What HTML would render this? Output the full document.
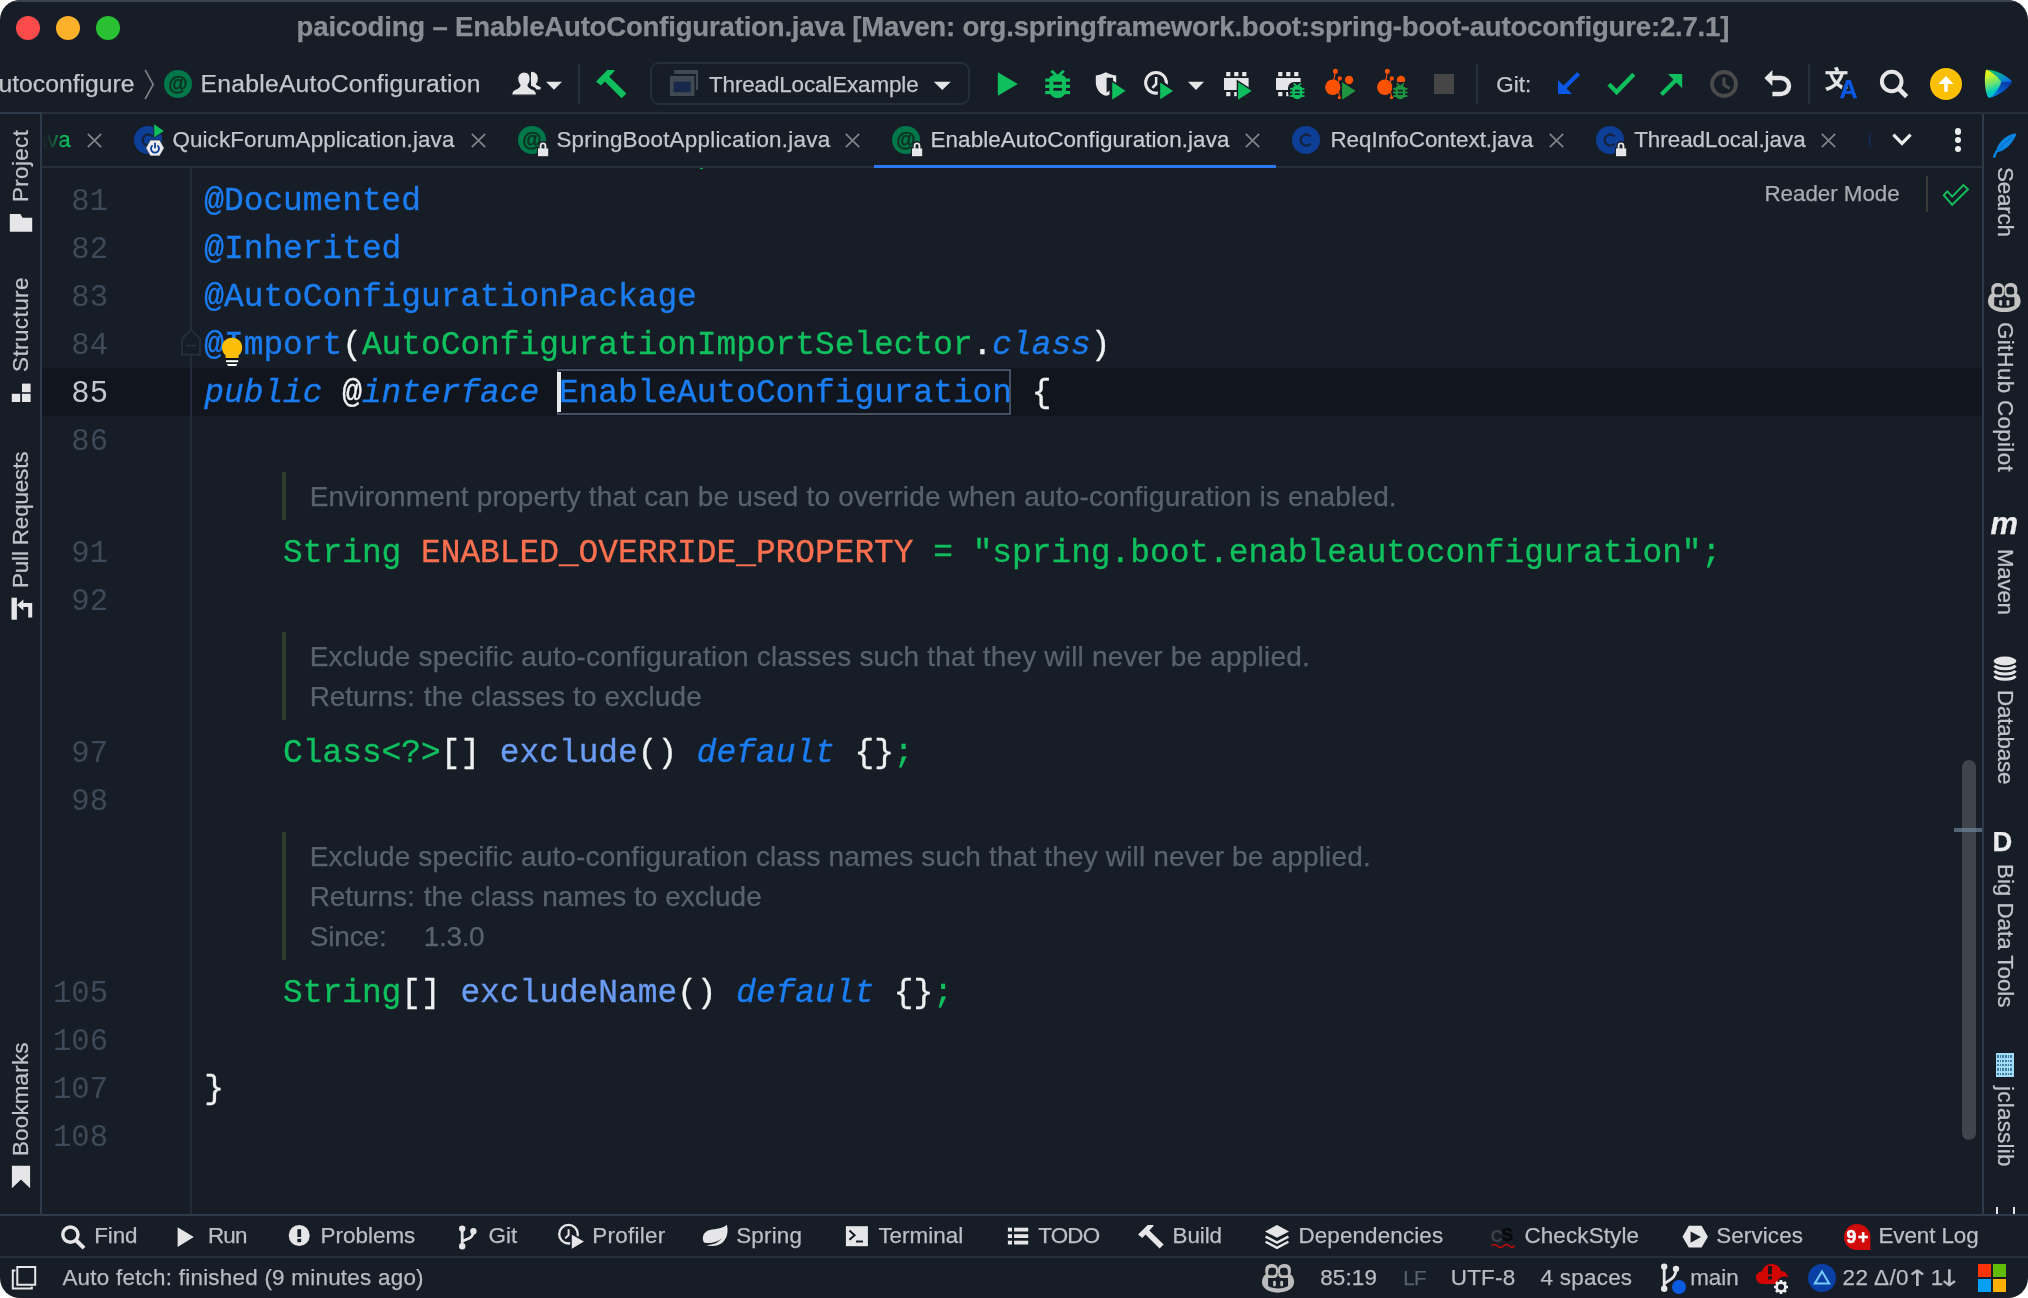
<!DOCTYPE html>
<html lang="en"><head><meta charset="utf-8"><title>paicoding – EnableAutoConfiguration.java</title>
<style>
html,body{margin:0;padding:0;background:#fff;}
body{width:2028px;height:1298px;overflow:hidden;position:relative;font-family:'Liberation Sans',sans-serif;}
#win{will-change:transform;position:absolute;left:0;top:0;width:2028px;height:1298px;background:#171d26;border-radius:20px;overflow:hidden;}
.t{-webkit-text-stroke:0.25px currentColor;position:absolute;white-space:pre;line-height:1;transform-origin:0 0;}
.r{position:absolute;}
.i{position:absolute;overflow:visible;}
.code{-webkit-text-stroke:0.35px currentColor;position:absolute;left:204.3px;white-space:pre;font-family:'Liberation Mono',monospace;font-size:32.83px;line-height:48px;height:48px;color:#f0f1f3;}
.ln{position:absolute;left:42px;width:66px;text-align:right;white-space:pre;font-family:'Liberation Mono',monospace;font-size:30.6px;line-height:48px;height:48px;color:#3e4a58;}
.k{color:#1b7df2;font-style:italic;}
.a{color:#1b7df2;}
.c{color:#10bf5e;}
.o{color:#fc7050;}
.m{color:#6a9cf4;}
.doc{position:absolute;white-space:pre;font-size:28px;line-height:40px;color:#5a626d;}

</style></head>
<body>
<div id="win">
<div class="r" style="left:0px;top:0px;width:2028px;height:2px;background:#3a434e;"></div>
<div class="r" style="left:0px;top:112px;width:2028px;height:2px;background:#262f3b;"></div>
<div class="r" style="left:0px;top:112px;width:42px;height:2px;background:#2f3a48;"></div>
<div class="r" style="left:42px;top:166px;width:1940px;height:2px;background:#262f3b;"></div>
<div class="r" style="left:40px;top:114px;width:2px;height:1100px;background:#2f3a48;"></div>
<div class="r" style="left:1982px;top:114px;width:2px;height:1100px;background:#2f3a48;"></div>
<div class="r" style="left:0px;top:1214px;width:2028px;height:2px;background:#2f3a48;"></div>
<div class="r" style="left:0px;top:1256px;width:2028px;height:2px;background:#262f3b;"></div>
<div class="r" style="left:42px;top:368px;width:1940px;height:48px;background:#11161e;"></div>
<div class="r" style="left:190px;top:168px;width:2px;height:1046px;background:#222b37;"></div>
<div class="r" style="left:16px;top:16px;width:24px;height:24px;background:#fd4b4b;border-radius:50%;"></div>
<div class="r" style="left:56px;top:16px;width:24px;height:24px;background:#fdb02a;border-radius:50%;"></div>
<div class="r" style="left:96px;top:16px;width:24px;height:24px;background:#29c132;border-radius:50%;"></div>
<span class="t" style="font-size:27.6px;color:#8b8f95;letter-spacing:-0.210px;font-weight:700;left:296.60px;top:12.64px;">paicoding – EnableAutoConfiguration.java [Maven: org.springframework.boot:spring-boot-autoconfigure:2.7.1]</span>
<div class="ln" style="top:177.6px;">81</div>
<div class="code" style="top:178.4px"><span class="a">@Documented</span></div>
<div class="ln" style="top:225.6px;">82</div>
<div class="code" style="top:226.4px"><span class="a">@Inherited</span></div>
<div class="ln" style="top:273.6px;">83</div>
<div class="code" style="top:274.4px"><span class="a">@AutoConfigurationPackage</span></div>
<div class="ln" style="top:321.6px;">84</div>
<div class="code" style="top:322.4px"><span class="a">@Import</span>(<span class="c">AutoConfigurationImportSelector</span>.<span class="k">class</span>)</div>
<div class="ln" style="top:369.6px;color:#c3c6cc;">85</div>
<div class="code" style="top:370.4px"><span class="k">public</span> @<span class="k">interface</span> <span class="a">EnableAutoConfiguration</span> {</div>
<div class="ln" style="top:417.6px;">86</div>
<div class="ln" style="top:529.6px;">91</div>
<div class="code" style="top:530.4px">    <span class="c">String</span> <span class="o">ENABLED_OVERRIDE_PROPERTY</span> <span class="c">=</span> <span class="c">"spring.boot.enableautoconfiguration";</span></div>
<div class="ln" style="top:577.6px;">92</div>
<div class="ln" style="top:729.6px;">97</div>
<div class="code" style="top:730.4px">    <span class="c">Class&lt;?&gt;</span>[] <span class="m">exclude</span>() <span class="k">default</span> {}<span class="c">;</span></div>
<div class="ln" style="top:777.6px;">98</div>
<div class="ln" style="top:969.6px;">105</div>
<div class="code" style="top:970.4px">    <span class="c">String</span>[] <span class="m">excludeName</span>() <span class="k">default</span> {}<span class="c">;</span></div>
<div class="ln" style="top:1017.6px;">106</div>
<div class="ln" style="top:1065.6px;">107</div>
<div class="code" style="top:1066.4px">}</div>
<div class="ln" style="top:1113.6px;">108</div>
<div class="r" style="left:557px;top:369px;width:454px;height:46px;box-sizing:border-box;border:2px solid #46515f;"></div>
<div class="r" style="left:557px;top:372px;width:4px;height:40px;background:#e8eaed;"></div>
<div class="r" style="left:282px;top:472px;width:4px;height:48px;background:#2c3b2a;"></div>
<span class="t" style="font-size:28px;color:#5a626d;letter-spacing:0.173px;left:309.70px;top:483.30px;">Environment property that can be used to override when auto-configuration is enabled.</span>
<div class="r" style="left:282px;top:632px;width:4px;height:88px;background:#2c3b2a;"></div>
<span class="t" style="font-size:28px;color:#5a626d;letter-spacing:0.185px;left:309.70px;top:643.30px;">Exclude specific auto-configuration classes such that they will never be applied.</span>
<span class="t" style="font-size:28px;color:#5a626d;letter-spacing:-0.117px;left:309.70px;top:683.30px;">Returns:</span>
<span class="t" style="font-size:28px;color:#5a626d;letter-spacing:0.115px;left:423.80px;top:683.30px;">the classes to exclude</span>
<div class="r" style="left:282px;top:832px;width:4px;height:128px;background:#2c3b2a;"></div>
<span class="t" style="font-size:28px;color:#5a626d;letter-spacing:0.161px;left:309.70px;top:843.30px;">Exclude specific auto-configuration class names such that they will never be applied.</span>
<span class="t" style="font-size:28px;color:#5a626d;letter-spacing:-0.117px;left:309.70px;top:883.30px;">Returns:</span>
<span class="t" style="font-size:28px;color:#5a626d;letter-spacing:0.007px;left:423.80px;top:883.30px;">the class names to exclude</span>
<span class="t" style="font-size:28px;color:#5a626d;letter-spacing:-0.164px;left:309.70px;top:923.30px;">Since:</span>
<span class="t" style="font-size:28px;color:#5a626d;letter-spacing:-0.344px;left:423.80px;top:923.30px;">1.3.0</span>
<span class="t" style="font-size:24.7px;color:#c3c6cc;letter-spacing:0.010px;left:-15.30px;top:72.09px;">autoconfigure</span>
<svg class="i" style="left:142px;top:68px;" width="14" height="34" viewBox="0 0 14 34"><polyline points="3.2,2 11.2,16.5 3.2,31" fill="none" stroke="#7d8189" stroke-width="1.6"/></svg>
<div class="r" style="left:164px;top:70px;width:28px;height:28px;background:#00784a;border-radius:50%;"></div>
<span class="t" style="font-size:19.8px;color:#0e3322;letter-spacing:0.000px;font-weight:700;left:168.30px;top:73.64px;-webkit-text-stroke:0.5px #0e3322;">@</span>
<span class="t" style="font-size:24.7px;color:#c3c6cc;letter-spacing:0.253px;left:200.50px;top:72.09px;">EnableAutoConfiguration</span>
<svg class="i" style="left:510px;top:70px;" width="54" height="28" viewBox="0 0 54 28"><path fill="#e6e6e8" d="M21,1.8 C25.4,1.8 27.8,4.6 27.8,8.4 C27.8,10.8 27,12.6 25.8,13.8 C26,15.4 27.6,16 30.6,17 L30.6,19.4 L26.6,19.4 C25.6,17.8 23.4,16.6 21,15.8 Z"/><path fill="#e6e6e8" stroke="#171d26" stroke-width="1.2" d="M14,2 C18,2 20.3,5 20.3,9 C20.3,12 19.2,14 18,15.2 C18.2,17.4 20,18.2 23.2,19.4 C25.6,20.4 26.6,22.4 26.6,25.2 L1.6,25.2 C1.6,22.4 2.6,20.4 5,19.4 C8.2,18.2 9.8,17.4 10,15.2 C8.8,14 7.7,12 7.7,9 C7.7,5 10,2 14,2 Z"/><path fill="#e6e6e8" d="M36,11.7 L52,11.7 L44,19.8 Z"/></svg>
<div class="r" style="left:578px;top:64px;width:2px;height:40px;background:#27303b;"></div>
<svg class="i" style="left:594px;top:68px;" width="36" height="32" viewBox="0 0 36 32"><path fill="#0fbf5e" d="M2,13.6 L13.4,2 L20,2 L20.6,3 L7,17.6 Z"/><path fill="#0fbf5e" d="M14.8,8.2 L32.4,25.4 L27.6,30.2 L10.2,12.8 Z"/></svg>
<div class="r" style="left:650px;top:62px;width:320px;height:43px;box-sizing:border-box;border:2px solid #252e3a;border-radius:9px;"></div>
<svg class="i" style="left:670px;top:70px;" width="30" height="27" viewBox="0 0 30 27"><path fill="#414953" d="M4.2,0 H28 V20 H26 V4 H4.2 Z"/><rect x="0" y="6" width="24.4" height="20" fill="#414953"/><rect x="3.6" y="11.6" width="17" height="10.6" fill="#18284a"/></svg>
<span class="t" style="font-size:22.4px;color:#c3c6cc;letter-spacing:-0.116px;left:709.00px;top:74.24px;">ThreadLocalExample</span>
<svg class="i" style="left:932px;top:80px;" width="20" height="12" viewBox="0 0 20 12"><path fill="#e6e6e8" d="M1.8,1.7 L18.8,1.7 L10.3,10 Z"/></svg>
<svg class="i" style="left:996px;top:70px;" width="24" height="28" viewBox="0 0 24 28"><path fill="#0fbf5e" d="M1.8,2.2 L21.8,13.9 L1.8,25.8 Z"/></svg>
<svg class="i" style="left:1045px;top:69.6px;" width="26" height="30" viewBox="0 0 26 30"><g transform="scale(0.97)"><path fill="none" stroke="#0fbf5e" stroke-width="3" d="M6.6,0.8 L13,7 L19.4,0.8"/><path fill="#0fbf5e" d="M4.4,9.8 C4.4,6.6 7,5 13,5 C19,5 21.6,6.6 21.6,9.8 L21.6,20 C21.6,25.4 17.8,28.8 13,28.8 C8.2,28.8 4.4,25.4 4.4,20 Z"/><rect fill="#0fbf5e" x="0.2" y="8.8" width="25.6" height="3.3"/><rect fill="#0fbf5e" x="0.2" y="15.2" width="25.6" height="3.3"/><rect fill="#0fbf5e" x="0.2" y="21.6" width="25.6" height="3.3"/><rect fill="#171d26" x="8.6" y="12.2" width="8.8" height="2.9"/><rect fill="#171d26" x="8.6" y="18.5" width="8.8" height="2.9"/></g></svg>
<svg class="i" style="left:1094px;top:70px;" width="34" height="32" viewBox="0 0 34 32"><path fill="#e6e6e8" d="M1.8,5.4 C5.6,5 9,3.8 11.8,2.2 C14.6,3.8 18,5 22.2,5.4 L22.2,13 L19,13 L19,7.8 L12.6,7.8 L12.6,22.4 L15.5,20.6 L15.5,24.4 C14.4,25.2 13.2,25.6 11.8,25.8 C5.6,24 1.8,18.6 1.8,12 Z"/><path fill="#0fbf5e" stroke="#171d26" stroke-width="1.6" d="M17.4,10.6 L33,20.9 L17.4,31.2 Z"/></svg>
<svg class="i" style="left:1142px;top:68px;" width="36" height="34" viewBox="0 0 36 34"><circle cx="14" cy="14.8" r="10.4" fill="none" stroke="#e6e6e8" stroke-width="3"/><path fill="none" stroke="#e6e6e8" stroke-width="2.6" d="M14.2,9 L14.2,16 L10.4,19.8"/><path fill="#0fbf5e" stroke="#171d26" stroke-width="2.4" d="M17,12.2 L33.2,22.9 L17,33.6 Z"/></svg>
<svg class="i" style="left:1186px;top:80px;" width="20" height="12" viewBox="0 0 20 12"><path fill="#e6e6e8" d="M2,1.7 L18,1.7 L10,10 Z"/></svg>
<svg class="i" style="left:1224px;top:72px;" width="26" height="26" viewBox="0 0 26 26"><rect x="2.2" y="0" width="4.2" height="4.2" fill="#e6e6e8"/><rect x="2.2" y="20" width="4.2" height="4.2" fill="#e6e6e8"/><rect x="10.2" y="0" width="4.2" height="4.2" fill="#e6e6e8"/><rect x="10.2" y="20" width="4.2" height="4.2" fill="#e6e6e8"/><rect x="18.2" y="0" width="4.2" height="4.2" fill="#e6e6e8"/><rect x="18.2" y="20" width="4.2" height="4.2" fill="#e6e6e8"/><rect x="0" y="6" width="24.6" height="12" fill="#e6e6e8"/></svg>
<svg class="i" style="left:1236px;top:80px;" width="18" height="22" viewBox="0 0 18 22"><path fill="#0fbf5e" stroke="#171d26" stroke-width="1.4" d="M1.4,0.9 L17,10.9 L1.4,21 Z"/></svg>
<svg class="i" style="left:1276px;top:72px;" width="26" height="26" viewBox="0 0 26 26"><rect x="2.2" y="0" width="4.2" height="4.2" fill="#e6e6e8"/><rect x="2.2" y="20" width="4.2" height="4.2" fill="#e6e6e8"/><rect x="10.2" y="0" width="4.2" height="4.2" fill="#e6e6e8"/><rect x="10.2" y="20" width="4.2" height="4.2" fill="#e6e6e8"/><rect x="18.2" y="0" width="4.2" height="4.2" fill="#e6e6e8"/><rect x="18.2" y="20" width="4.2" height="4.2" fill="#e6e6e8"/><rect x="0" y="6" width="24.6" height="12" fill="#e6e6e8"/></svg>
<div class="r" style="left:1288px;top:82px;width:18px;height:19px;background:#171d26;border-radius:6px 6px 8px 8px;"></div>
<svg class="i" style="left:1289.6px;top:83px;" width="16" height="18" viewBox="0 0 16 18"><g transform="scale(0.56)"><path fill="none" stroke="#0fbf5e" stroke-width="3" d="M6.6,0.8 L13,7 L19.4,0.8"/><path fill="#0fbf5e" d="M4.4,9.8 C4.4,6.6 7,5 13,5 C19,5 21.6,6.6 21.6,9.8 L21.6,20 C21.6,25.4 17.8,28.8 13,28.8 C8.2,28.8 4.4,25.4 4.4,20 Z"/><rect fill="#0fbf5e" x="0.2" y="8.8" width="25.6" height="3.3"/><rect fill="#0fbf5e" x="0.2" y="15.2" width="25.6" height="3.3"/><rect fill="#0fbf5e" x="0.2" y="21.6" width="25.6" height="3.3"/><rect fill="#171d26" x="8.6" y="12.2" width="8.8" height="2.9"/><rect fill="#171d26" x="8.6" y="18.5" width="8.8" height="2.9"/></g></svg>
<svg class="i" style="left:1325px;top:66px;" width="32" height="36" viewBox="0 0 32 36"><g fill="#ff5200" stroke="#ff5200"><path fill="none" stroke-width="1.1" d="M10.4,5.4 L8.6,16 M14.8,12.6 L12.5,17 M14.6,31.6 L13.6,26"/><circle cx="7.8" cy="21.3" r="7.7" stroke="none"/><circle cx="10.4" cy="5.3" r="2.5" stroke="none"/><circle cx="14.8" cy="12.4" r="2.1" stroke="none"/><circle cx="24" cy="14" r="4.2" stroke="none"/><circle cx="14.5" cy="31.6" r="1.7" stroke="none"/></g></svg>
<svg class="i" style="left:1340px;top:80px;" width="18" height="22" viewBox="0 0 18 22"><path fill="#1f9440" stroke="#171d26" stroke-width="1.4" d="M1.4,0.9 L17,10.9 L1.4,21 Z"/></svg>
<svg class="i" style="left:1377px;top:66px;" width="32" height="36" viewBox="0 0 32 36"><g fill="#ff5200" stroke="#ff5200"><path fill="none" stroke-width="1.1" d="M10.4,5.4 L8.6,16 M14.8,12.6 L12.5,17 M14.6,31.6 L13.6,26"/><circle cx="7.8" cy="21.3" r="7.7" stroke="none"/><circle cx="10.4" cy="5.3" r="2.5" stroke="none"/><circle cx="14.8" cy="12.4" r="2.1" stroke="none"/><circle cx="24" cy="14" r="4.2" stroke="none"/><circle cx="14.5" cy="31.6" r="1.7" stroke="none"/></g></svg>
<div class="r" style="left:1392px;top:82px;width:18px;height:19px;background:#171d26;border-radius:6px 6px 8px 8px;"></div>
<svg class="i" style="left:1393.4px;top:83px;" width="16" height="18" viewBox="0 0 16 18"><g transform="scale(0.56)"><path fill="none" stroke="#1f9440" stroke-width="3" d="M6.6,0.8 L13,7 L19.4,0.8"/><path fill="#1f9440" d="M4.4,9.8 C4.4,6.6 7,5 13,5 C19,5 21.6,6.6 21.6,9.8 L21.6,20 C21.6,25.4 17.8,28.8 13,28.8 C8.2,28.8 4.4,25.4 4.4,20 Z"/><rect fill="#1f9440" x="0.2" y="8.8" width="25.6" height="3.3"/><rect fill="#1f9440" x="0.2" y="15.2" width="25.6" height="3.3"/><rect fill="#1f9440" x="0.2" y="21.6" width="25.6" height="3.3"/><rect fill="#171d26" x="8.6" y="12.2" width="8.8" height="2.9"/><rect fill="#171d26" x="8.6" y="18.5" width="8.8" height="2.9"/></g></svg>
<div class="r" style="left:1434px;top:74px;width:20px;height:20px;background:#464646;"></div>
<div class="r" style="left:1476px;top:64px;width:2px;height:40px;background:#27303b;"></div>
<span class="t" style="font-size:22.4px;color:#c3c6cc;letter-spacing:0.051px;left:1496.20px;top:74.04px;">Git:</span>
<svg class="i" style="left:1556px;top:70px;" width="26" height="26" viewBox="0 0 26 26"><path stroke="#0b58e6" stroke-width="4.2" fill="none" d="M22.6,3.4 L7,19"/><path fill="#0b58e6" d="M2,10 L2,24 L16,24 Z"/></svg>
<svg class="i" style="left:1606px;top:70px;" width="30" height="26" viewBox="0 0 30 26"><path stroke="#0fbf5e" stroke-width="4.4" fill="none" d="M3,14.2 L10.6,22 L27.8,4.2"/></svg>
<svg class="i" style="left:1658px;top:70px;" width="26" height="26" viewBox="0 0 26 26"><path stroke="#0fbf5e" stroke-width="4.2" fill="none" d="M3.4,24.6 L19,9"/><path fill="#0fbf5e" d="M10,4 L24.2,4 L24.2,18.2 Z"/></svg>
<svg class="i" style="left:1709px;top:69px;" width="30" height="30" viewBox="0 0 30 30"><circle cx="15" cy="15" r="12" fill="none" stroke="#4b4b4b" stroke-width="3.8"/><path fill="none" stroke="#4b4b4b" stroke-width="3" d="M15,8.6 L15,16 L20.6,19.6"/></svg>
<svg class="i" style="left:1762px;top:68px;" width="30" height="30" viewBox="0 0 30 30"><path fill="#e6e6e8" d="M2.4,10 L10.4,2 L10.4,18 Z"/><path fill="none" stroke="#e6e6e8" stroke-width="4.4" d="M10,10 L19,10 A8,8 0 0 1 19,26 L10.4,26"/></svg>
<div class="r" style="left:1808px;top:64px;width:2px;height:40px;background:#27303b;"></div>
<span class="t" style="font-size:23.4px;color:#e6e6e8;letter-spacing:0.000px;left:1824.80px;top:69.19px;font-family:'Liberation Sans','Noto Sans CJK SC',sans-serif;font-weight:700;">文</span>
<span class="t" style="font-size:25px;color:#0b58e6;letter-spacing:0.000px;font-weight:700;left:1839.60px;top:76.64px;text-shadow:-1.6px 0 #171d26,0 -1.6px #171d26,-1.2px -1.2px #171d26;">A</span>
<svg class="i" style="left:1878px;top:68px;" width="32" height="32" viewBox="0 0 32 32"><circle cx="13.7" cy="13.5" r="9.8" fill="none" stroke="#e6e6e8" stroke-width="4"/><path stroke="#e6e6e8" stroke-width="4.6" d="M20.6,20.6 L28.6,28.6"/></svg>
<div class="r" style="left:1930px;top:68px;width:32px;height:32px;background:#fbc003;border-radius:50%;"></div>
<svg class="i" style="left:1930px;top:68px;" width="32" height="32" viewBox="0 0 32 32"><path fill="#fff" d="M16,8 L23.6,16 L17.8,16 L17.8,23.8 L14.2,23.8 L14.2,16 L8.4,16 Z"/></svg>
<svg class="i" style="left:1982px;top:68px;" width="32" height="32" viewBox="0 0 32 32"><defs><linearGradient id="g1" x1="0.2" y1="0" x2="0.45" y2="1"><stop offset="0" stop-color="#fbfb05"/><stop offset="0.25" stop-color="#c2f235"/><stop offset="0.55" stop-color="#62e278"/><stop offset="0.78" stop-color="#04ccb6"/><stop offset="1" stop-color="#04b4ea"/></linearGradient><linearGradient id="g2" x1="0" y1="0" x2="1" y2="0.7"><stop offset="0" stop-color="#06dc50"/><stop offset="0.35" stop-color="#04b48c"/><stop offset="0.75" stop-color="#0690c8"/><stop offset="1" stop-color="#0474ec"/></linearGradient><linearGradient id="g3" x1="1" y1="0" x2="0" y2="1"><stop offset="0" stop-color="#06329c"/><stop offset="0.5" stop-color="#0656c4"/><stop offset="0.85" stop-color="#0480e0"/><stop offset="1" stop-color="#04a8f0"/></linearGradient></defs><path fill="url(#g2)" d="M4.6,1.8 C14,2 24,7 30.4,13.8 L19,14.4 C16,9 10,4.6 4.6,1.8 Z"/><path fill="url(#g3)" d="M30.4,13.8 C26,21 17,27.6 8,29.8 C13,25.4 17,20 19,13.8 Z"/><path fill="url(#g1)" d="M4.6,1.8 C10.4,4.4 16.4,8.8 19.2,14 C17.6,20 13.4,25.6 8,29.8 C6.4,30 5.6,29 5.2,27.6 C2.6,20 2.4,10 3.6,3.6 C3.8,2.4 4,1.8 4.6,1.8 Z"/></svg>
<div class="r" style="left:42px;top:116px;width:40px;height:48px;overflow:hidden;"><span class="t" style="left:-12.4px;top:13.34px;font-size:22.4px;color:#0fbf5e;">java</span><div class="r" style="left:0;top:0;width:22px;height:48px;background:linear-gradient(90deg,#171d26 0%,rgba(23,29,38,0.75) 45%,rgba(23,29,38,0) 100%);"></div></div>
<svg class="i" style="left:87px;top:133px;" width="15" height="15" viewBox="0 0 15 15"><path stroke="#80848b" stroke-width="1.7" fill="none" d="M0.8,0.8 L14.2,14.2 M14.2,0.8 L0.8,14.2"/></svg>
<div class="r" style="left:134px;top:126px;width:28px;height:28px;background:#0d3f96;border-radius:50%;"></div>
<svg class="i" style="left:134px;top:126px;" width="28" height="28" viewBox="0 0 28 28"><path fill="none" stroke="#15233f" stroke-width="2.3" d="M18.6,10.6 A5.6,5.6 0 1 0 18.6,17.6"/></svg>
<svg class="i" style="left:152px;top:122px;" width="14" height="18" viewBox="0 0 14 18"><path fill="#0fbf5e" stroke="#171d26" stroke-width="0.8" d="M1.8,1.6 L12.4,9 L1.8,16 Z"/></svg>
<svg class="i" style="left:145px;top:139px;" width="20" height="18" viewBox="0 0 20 18"><path fill="#ececee" stroke="#171d26" stroke-width="0.6" d="M0.8,9 L5.4,1.1 L14.7,1.1 L19.2,9 L14.7,16.9 L5.4,16.9 Z"/><path fill="none" stroke="#0d3f96" stroke-width="1.8" d="M7.6,6.4 A4,4 0 1 0 12.4,6.4"/><path stroke="#0d3f96" stroke-width="1.8" d="M10,3.8 V9.2"/></svg>
<span class="t" style="font-size:22.4px;color:#c3c6cc;letter-spacing:0.129px;left:172.40px;top:129.34px;">QuickForumApplication.java</span>
<svg class="i" style="left:470.5px;top:133px;" width="15" height="15" viewBox="0 0 15 15"><path stroke="#80848b" stroke-width="1.7" fill="none" d="M0.8,0.8 L14.2,14.2 M14.2,0.8 L0.8,14.2"/></svg>
<div class="r" style="left:518px;top:126px;width:28px;height:28px;background:#00784a;border-radius:50%;"></div>
<span class="t" style="font-size:19.8px;color:#0e3322;letter-spacing:0.000px;font-weight:700;left:522.30px;top:129.64px;-webkit-text-stroke:0.5px #0e3322;">@</span>
<svg class="i" style="left:537.2px;top:141.8px;" width="12" height="15" viewBox="0 0 12 15"><rect x="0" y="5" width="12" height="10" fill="#171d26"/><path fill="none" stroke="#171d26" stroke-width="4.4" d="M3.6,7 V3.6 A2.4,2.4 0 0 1 8.4,3.6 V7"/><path fill="none" stroke="#e6e6e8" stroke-width="1.9" d="M3.6,7 V3.8 A2.4,2.4 0 0 1 8.4,3.8 V7"/><rect x="1" y="6.4" width="10.2" height="7.8" fill="#e6e6e8"/></svg>
<span class="t" style="font-size:22.4px;color:#c3c6cc;letter-spacing:0.243px;left:556.40px;top:129.34px;">SpringBootApplication.java</span>
<svg class="i" style="left:844.5px;top:133px;" width="15" height="15" viewBox="0 0 15 15"><path stroke="#80848b" stroke-width="1.7" fill="none" d="M0.8,0.8 L14.2,14.2 M14.2,0.8 L0.8,14.2"/></svg>
<div class="r" style="left:892px;top:126px;width:28px;height:28px;background:#00784a;border-radius:50%;"></div>
<span class="t" style="font-size:19.8px;color:#0e3322;letter-spacing:0.000px;font-weight:700;left:896.30px;top:129.64px;-webkit-text-stroke:0.5px #0e3322;">@</span>
<svg class="i" style="left:911.2px;top:141.8px;" width="12" height="15" viewBox="0 0 12 15"><rect x="0" y="5" width="12" height="10" fill="#171d26"/><path fill="none" stroke="#171d26" stroke-width="4.4" d="M3.6,7 V3.6 A2.4,2.4 0 0 1 8.4,3.6 V7"/><path fill="none" stroke="#e6e6e8" stroke-width="1.9" d="M3.6,7 V3.8 A2.4,2.4 0 0 1 8.4,3.8 V7"/><rect x="1" y="6.4" width="10.2" height="7.8" fill="#e6e6e8"/></svg>
<span class="t" style="font-size:22.4px;color:#c9ccd2;letter-spacing:0.097px;left:930.50px;top:129.34px;">EnableAutoConfiguration.java</span>
<svg class="i" style="left:1244.5px;top:133px;" width="15" height="15" viewBox="0 0 15 15"><path stroke="#80848b" stroke-width="1.7" fill="none" d="M0.8,0.8 L14.2,14.2 M14.2,0.8 L0.8,14.2"/></svg>
<div class="r" style="left:874px;top:165px;width:402px;height:3px;background:#2b79f2;"></div>
<div class="r" style="left:1292px;top:126px;width:28px;height:28px;background:#0d3f96;border-radius:50%;"></div>
<svg class="i" style="left:1292px;top:126px;" width="28" height="28" viewBox="0 0 28 28"><path fill="none" stroke="#15233f" stroke-width="2.3" d="M18.6,10.6 A5.6,5.6 0 1 0 18.6,17.6"/></svg>
<span class="t" style="font-size:22.4px;color:#c3c6cc;letter-spacing:-0.009px;left:1330.40px;top:129.34px;">ReqInfoContext.java</span>
<svg class="i" style="left:1549px;top:133px;" width="15" height="15" viewBox="0 0 15 15"><path stroke="#80848b" stroke-width="1.7" fill="none" d="M0.8,0.8 L14.2,14.2 M14.2,0.8 L0.8,14.2"/></svg>
<div class="r" style="left:1596px;top:126px;width:28px;height:28px;background:#0d3f96;border-radius:50%;"></div>
<svg class="i" style="left:1596px;top:126px;" width="28" height="28" viewBox="0 0 28 28"><path fill="none" stroke="#15233f" stroke-width="2.3" d="M18.6,10.6 A5.6,5.6 0 1 0 18.6,17.6"/></svg>
<svg class="i" style="left:1615.2px;top:141.8px;" width="12" height="15" viewBox="0 0 12 15"><rect x="0" y="5" width="12" height="10" fill="#171d26"/><path fill="none" stroke="#171d26" stroke-width="4.4" d="M3.6,7 V3.6 A2.4,2.4 0 0 1 8.4,3.6 V7"/><path fill="none" stroke="#e6e6e8" stroke-width="1.9" d="M3.6,7 V3.8 A2.4,2.4 0 0 1 8.4,3.8 V7"/><rect x="1" y="6.4" width="10.2" height="7.8" fill="#e6e6e8"/></svg>
<span class="t" style="font-size:22.4px;color:#c3c6cc;letter-spacing:-0.023px;left:1634.20px;top:129.34px;">ThreadLocal.java</span>
<svg class="i" style="left:1821px;top:133px;" width="15" height="15" viewBox="0 0 15 15"><path stroke="#80848b" stroke-width="1.7" fill="none" d="M0.8,0.8 L14.2,14.2 M14.2,0.8 L0.8,14.2"/></svg>
<div class="r" style="left:1867px;top:126px;width:4px;height:28px;overflow:hidden;opacity:.3"><div class="r" style="left:1px;top:0;width:28px;height:28px;border-radius:50%;background:#0d3f96"></div></div>
<svg class="i" style="left:1891px;top:132px;" width="22" height="16" viewBox="0 0 22 16"><path fill="none" stroke="#eceded" stroke-width="3.2" d="M2.4,2.6 L11,11.4 L19.6,2.6"/></svg>
<div class="r" style="left:1954.6px;top:128.4px;width:6.2px;height:6.2px;background:#eceded;border-radius:50%;"></div>
<div class="r" style="left:1954.6px;top:137.20000000000002px;width:6.2px;height:6.2px;background:#eceded;border-radius:50%;"></div>
<div class="r" style="left:1954.6px;top:145.9px;width:6.2px;height:6.2px;background:#eceded;border-radius:50%;"></div>
<span class="t" style="font-size:22.4px;color:#a9acb1;letter-spacing:-0.052px;left:1764.50px;top:182.64px;">Reader Mode</span>
<div class="r" style="left:1926px;top:176px;width:2px;height:36px;background:#3b3a36;"></div>
<svg class="i" style="left:1942px;top:183px;" width="28" height="24" viewBox="0 0 28 24"><path fill="none" stroke="#13bd5d" stroke-width="1.9" stroke-linejoin="miter" d="M1.8,12.2 L5.4,8.4 L10.2,13.6 L21.4,2 L26,6.2 L10.2,21.8 Z"/></svg>
<div class="r" style="left:1962px;top:760px;width:14px;height:380px;background:rgba(120,124,130,0.42);border-radius:7px;"></div>
<div class="r" style="left:1954px;top:828px;width:28px;height:4px;background:rgba(110,132,152,0.7);"></div>
<div class="r" style="left:699.5px;top:168px;width:3.2px;height:1.2px;background:#0fae56;"></div>
<svg class="i" style="left:181px;top:329px;" width="20" height="27" viewBox="0 0 20 27"><path fill="#171d26" stroke="#27313d" stroke-width="1.6" d="M1,9.6 L10,1 L19,9.6 V25.6 H1 Z"/><path stroke="#27313d" stroke-width="1.6" d="M5.4,16.6 H14.6"/></svg>
<svg class="i" style="left:220px;top:336px;" width="24" height="32" viewBox="0 0 24 32"><path fill="#fbbf07" d="M12.1,1.7 C18,1.7 22.2,6 22.2,11.6 C22.2,15.4 20.4,17.6 18.6,19.6 L18.6,22 L5.6,22 L5.6,19.6 C3.8,17.6 2,15.4 2,11.6 C2,6 6.2,1.7 12.1,1.7 Z"/><rect x="5.6" y="22" width="13" height="2.2" fill="#0b0f18"/><rect x="6" y="24.2" width="12.2" height="2" fill="#ffffff"/><path fill="#ffffff" d="M7,28 H17.2 C17,29.4 16,30 15,30 H9.2 C8.2,30 7.2,29.4 7,28 Z"/></svg>
<span class="t" style="font-size:22.4px;color:#c0c3c9;letter-spacing:0.364px;left:10.24px;top:202.30px;transform:rotate(-90deg);">Project</span>
<svg class="i" style="left:9px;top:213px;" width="24" height="20" viewBox="0 0 24 20"><path fill="#e6e6e8" d="M0.8,0.9 H11.4 L13.6,4.8 H23.2 V18.8 H0.8 Z"/></svg>
<span class="t" style="font-size:22.4px;color:#c0c3c9;letter-spacing:0.452px;left:10.44px;top:371.70px;transform:rotate(-90deg);">Structure</span>
<svg class="i" style="left:11px;top:383px;" width="20" height="20" viewBox="0 0 20 20"><rect x="11" y="0.6" width="8.6" height="8.6" fill="#e6e6e8"/><rect x="0.8" y="10.8" width="8.4" height="8.2" fill="#e6e6e8"/><rect x="11" y="10.8" width="8.6" height="8.2" fill="#e6e6e8"/></svg>
<span class="t" style="font-size:22.4px;color:#c0c3c9;letter-spacing:-0.142px;left:10.24px;top:587.50px;transform:rotate(-90deg);">Pull Requests</span>
<svg class="i" style="left:11px;top:597px;" width="22" height="24" viewBox="0 0 22 24"><rect x="0.5" y="0.7" width="5.4" height="22" fill="#e6e6e8"/><path fill="#e6e6e8" d="M5.9,8 L12.4,2.4 V6 H21.2 V20.4 H17.2 V10 H12.4 V13.6 Z"/></svg>
<span class="t" style="font-size:22.4px;color:#c0c3c9;letter-spacing:0.183px;left:10.44px;top:1155.90px;transform:rotate(-90deg);">Bookmarks</span>
<svg class="i" style="left:11px;top:1165px;" width="20" height="24" viewBox="0 0 20 24"><path fill="#e6e6e8" d="M0.9,0.8 H19.1 V23.2 L10,14.6 L0.9,23.2 Z"/></svg>
<svg class="i" style="left:1992px;top:132px;" width="26" height="28" viewBox="0 0 26 28"><path fill="#0b86e3" d="M24.4,1.5 C17.4,2 10.4,6.4 6.6,12.8 C5,15.4 4,18.2 4,20.2 C8,20.4 13.6,17.8 18,12.6 C21.4,8.6 23.8,4.6 24.4,1.5 Z"/><path stroke="#0b86e3" stroke-width="2.4" d="M4.6,19 L1.8,25.6"/><path stroke="#0a5fae" stroke-width="1.1" stroke-dasharray="1.6 1.4" fill="none" d="M6,19 C10,13 15,8.6 20,5.4"/></svg>
<span class="t" style="font-size:22.4px;color:#c0c3c9;letter-spacing:-0.215px;left:2016.26px;top:166.60px;transform:rotate(90deg);">Search</span>
<svg class="i" style="left:1987.6px;top:283px;" width="34" height="31" viewBox="0 0 34 31"><g transform="scale(1)"><path fill="#c2c2c2" d="M3.3,10.6 C1,12.8 0,15.4 0,18.4 C0,25 7.5,29.1 16.3,29.1 C25.1,29.1 32.6,25 32.6,18.4 C32.6,15.4 31.6,12.8 29.3,10.6 Z"/><rect x="3.3" y="0" width="13" height="13.6" rx="5.6" fill="#c2c2c2"/><rect x="16.3" y="0" width="13" height="13.6" rx="5.6" fill="#c2c2c2"/><path fill="#171d26" d="M9,3.7 H11.6 C13.4,3.7 14.2,4.8 14.2,6.4 V8.4 C14.2,10.6 12.8,11.5 10.6,11.5 H8.8 C7,11.5 6.1,10.6 6.3,8.8 L6.6,6.2 C6.8,4.6 7.6,3.7 9,3.7 Z"/><path fill="#171d26" d="M23.6,3.7 H21 C19.2,3.7 18.4,4.8 18.4,6.4 V8.4 C18.4,10.6 19.8,11.5 22,11.5 H23.8 C25.6,11.5 26.5,10.6 26.3,8.8 L26,6.2 C25.8,4.6 25,3.7 23.6,3.7 Z"/><path fill="#171d26" d="M6.2,14.2 H12.6 C14.4,13.8 15.6,12.6 16.3,10.8 C17,12.6 18.2,13.8 20,14.2 H26.4 V22.4 C22,25.6 10.6,25.6 6.2,22.4 Z"/><rect x="11.2" y="16.9" width="2.9" height="5.9" rx="1.45" fill="#c2c2c2"/><rect x="18.5" y="16.9" width="2.9" height="5.9" rx="1.45" fill="#c2c2c2"/></g></svg>
<span class="t" style="font-size:22.4px;color:#c0c3c9;letter-spacing:0.310px;left:2016.26px;top:322.00px;transform:rotate(90deg);">GitHub Copilot</span>
<span class="t" style="font-size:31px;color:#ececee;letter-spacing:0.000px;font-weight:700;left:1990.40px;top:508.16px;font-style:italic;letter-spacing:-1px;">m</span>
<span class="t" style="font-size:22.4px;color:#c0c3c9;letter-spacing:-0.283px;left:2016.26px;top:548.60px;transform:rotate(90deg);">Maven</span>
<svg class="i" style="left:1993px;top:656px;" width="24" height="26" viewBox="0 0 24 26"><ellipse cx="12" cy="5" rx="11.4" ry="4.4" fill="#e6e6e8"/><path fill="none" stroke="#e6e6e8" stroke-width="3" d="M1.6,9.6 C4,13.8 20,13.8 22.4,9.6 M1.6,14.8 C4,19 20,19 22.4,14.8 M1.6,20 C4,24.2 20,24.2 22.4,20"/></svg>
<span class="t" style="font-size:22.4px;color:#c0c3c9;letter-spacing:-0.198px;left:2016.26px;top:690.20px;transform:rotate(90deg);">Database</span>
<span class="t" style="font-size:27.4px;color:#ececee;letter-spacing:0.000px;font-weight:700;left:1992.40px;top:828.41px;">D</span>
<span class="t" style="font-size:22.4px;color:#c0c3c9;letter-spacing:-0.040px;left:2016.26px;top:864.20px;transform:rotate(90deg);">Big Data Tools</span>
<div class="r" style="left:1995.6px;top:1053px;width:18.8px;height:24.4px;background:#a3ddf5;"></div>
<div class="r" style="left:1997.4px;top:1055.4px;width:15.2px;height:2.3px;background:#2a6f9c;opacity:.8;background:repeating-linear-gradient(90deg,#25668f 0 1.6px,#a3ddf5 1.6px 2.7px);"></div>
<div class="r" style="left:1997.4px;top:1059.7px;width:15.2px;height:2.3px;background:#2a6f9c;opacity:.8;background:repeating-linear-gradient(90deg,#25668f 0 1.6px,#a3ddf5 1.6px 2.7px);"></div>
<div class="r" style="left:1997.4px;top:1064.0px;width:15.2px;height:2.3px;background:#2a6f9c;opacity:.8;background:repeating-linear-gradient(90deg,#25668f 0 1.6px,#a3ddf5 1.6px 2.7px);"></div>
<div class="r" style="left:1997.4px;top:1068.3000000000002px;width:15.2px;height:2.3px;background:#2a6f9c;opacity:.8;background:repeating-linear-gradient(90deg,#25668f 0 1.6px,#a3ddf5 1.6px 2.7px);"></div>
<div class="r" style="left:1997.4px;top:1072.6000000000001px;width:15.2px;height:2.3px;background:#2a6f9c;opacity:.8;background:repeating-linear-gradient(90deg,#25668f 0 1.6px,#a3ddf5 1.6px 2.7px);"></div>
<span class="t" style="font-size:22.4px;color:#c0c3c9;letter-spacing:0.260px;left:2016.26px;top:1085.80px;transform:rotate(90deg);">jclasslib</span>
<div class="r" style="left:1996px;top:1207px;width:2px;height:7px;background:#e6e6e8;"></div>
<div class="r" style="left:2013px;top:1207px;width:2px;height:7px;background:#e6e6e8;"></div>
<svg class="i" style="left:60px;top:1224px;" width="27" height="27" viewBox="0 0 27 27"><circle cx="10.4" cy="10.6" r="7.6" fill="none" stroke="#e6e6e8" stroke-width="3.4"/><path stroke="#e6e6e8" stroke-width="4" d="M15.8,16 L24,24.2"/></svg>
<span class="t" style="font-size:22.4px;color:#bcbfc5;letter-spacing:-0.092px;left:94.20px;top:1225.34px;">Find</span>
<svg class="i" style="left:176px;top:1226px;" width="20" height="23" viewBox="0 0 20 23"><path fill="#e6e6e8" d="M1.6,1.2 L17.8,11 L1.6,21 Z"/></svg>
<span class="t" style="font-size:22.4px;color:#bcbfc5;letter-spacing:-0.846px;left:208.00px;top:1225.34px;">Run</span>
<svg class="i" style="left:288px;top:1224px;" width="23" height="23" viewBox="0 0 23 23"><circle cx="11.2" cy="11.5" r="10.5" fill="#e6e6e8"/><rect x="9.4" y="5.2" width="3.7" height="7.8" fill="#171d26"/><rect x="9.4" y="14.8" width="3.7" height="3.4" fill="#171d26"/></svg>
<span class="t" style="font-size:22.4px;color:#bcbfc5;letter-spacing:0.013px;left:320.60px;top:1225.34px;">Problems</span>
<svg class="i" style="left:457.6px;top:1224.8px;" width="22" height="32" viewBox="0 0 22 32"><path fill="none" stroke="#e6e6e8" stroke-width="2.8" d="M4.2,3.6 V21.3 M15.4,6.6 C15.4,13 10,13.6 4.6,16.1"/><circle cx="4.2" cy="3.6" r="3.2" fill="#e6e6e8"/><circle cx="4.2" cy="21.3" r="3.2" fill="#e6e6e8"/><circle cx="15.4" cy="6.2" r="3.2" fill="#e6e6e8"/></svg>
<span class="t" style="font-size:22.4px;color:#bcbfc5;letter-spacing:0.088px;left:488.40px;top:1225.34px;">Git</span>
<svg class="i" style="left:557px;top:1222px;" width="30" height="30" viewBox="0 0 30 30"><circle cx="11.5" cy="12.2" r="9.3" fill="none" stroke="#e6e6e8" stroke-width="2.3"/><path fill="none" stroke="#e6e6e8" stroke-width="2" d="M11.6,7.2 V13 L8.2,16.4"/><path fill="#e6e6e8" stroke="#171d26" stroke-width="1.6" d="M14,11.4 L28.6,19.5 L14,28.2 Z"/></svg>
<span class="t" style="font-size:22.4px;color:#bcbfc5;letter-spacing:0.293px;left:592.20px;top:1225.34px;">Profiler</span>
<svg class="i" style="left:702px;top:1224px;" width="27" height="24" viewBox="0 0 27 24"><path fill="#e6e6e8" d="M24.8,0.8 C26.6,7 25.4,14.6 20,19 C15.6,22.4 9,22.6 4,21 C9.4,21.4 16,19.4 19.8,14.6 C15,18.6 7.6,20 2,18.4 C-0.4,14.4 1,9 5.6,6.8 C11,4.2 19,6.2 24.8,0.8 Z"/></svg>
<span class="t" style="font-size:22.4px;color:#bcbfc5;letter-spacing:0.210px;left:736.20px;top:1225.34px;">Spring</span>
<svg class="i" style="left:845px;top:1226px;" width="24" height="21" viewBox="0 0 24 21"><rect x="0.9" y="0.2" width="22" height="20" fill="#e6e6e8"/><path fill="none" stroke="#171d26" stroke-width="2" d="M4.4,4.6 L9.6,9.2 L4.4,13.8 M11,15.4 H18"/></svg>
<span class="t" style="font-size:22.4px;color:#bcbfc5;letter-spacing:0.022px;left:878.40px;top:1225.34px;">Terminal</span>
<svg class="i" style="left:1007px;top:1226px;" width="23" height="21" viewBox="0 0 23 21"><rect x="0.9" y="1.7" width="4.1" height="3.8" fill="#e6e6e8"/><rect x="7.1" y="1.7" width="14.1" height="3.8" fill="#e6e6e8"/><rect x="0.9" y="8.2" width="4.1" height="3.8" fill="#e6e6e8"/><rect x="7.1" y="8.2" width="14.1" height="3.8" fill="#e6e6e8"/><rect x="0.9" y="14.7" width="4.1" height="3.8" fill="#e6e6e8"/><rect x="7.1" y="14.7" width="14.1" height="3.8" fill="#e6e6e8"/></svg>
<span class="t" style="font-size:22.4px;color:#bcbfc5;letter-spacing:-0.801px;left:1038.20px;top:1225.34px;">TODO</span>
<svg class="i" style="left:1136px;top:1223px;" width="30" height="28" viewBox="0 0 30 28"><g transform="translate(0.4,0.2) scale(0.84)"><path fill="#e6e6e8" d="M2,13.6 L13.4,2 L20,2 L20.6,3 L7,17.6 Z"/><path fill="#e6e6e8" d="M14.8,8.2 L32.4,25.4 L27.6,30.2 L10.2,12.8 Z"/></g></svg>
<span class="t" style="font-size:22.4px;color:#bcbfc5;letter-spacing:-0.077px;left:1172.60px;top:1225.34px;">Build</span>
<svg class="i" style="left:1264px;top:1224px;" width="26" height="26" viewBox="0 0 26 26"><path fill="#e6e6e8" d="M13,1 L25,7.4 L13,13.8 L1,7.4 Z"/><path fill="none" stroke="#e6e6e8" stroke-width="2.4" d="M1.6,12.6 L13,18.6 L24.4,12.6 M1.6,17.8 L13,23.8 L24.4,17.8"/></svg>
<span class="t" style="font-size:22.4px;color:#bcbfc5;letter-spacing:0.144px;left:1298.40px;top:1225.34px;">Dependencies</span>
<span class="t" style="font-size:16.5px;color:#3b4048;letter-spacing:0.000px;font-weight:700;left:1490.80px;top:1228.03px;">C</span>
<span class="t" style="font-size:17.5px;color:#07080a;letter-spacing:0.000px;font-weight:700;left:1501.40px;top:1227.19px;">S</span>
<svg class="i" style="left:1491px;top:1243px;" width="24" height="6" viewBox="0 0 24 6"><path fill="none" stroke="#c80a0a" stroke-width="1.5" d="M0.5,3 Q3.5,0 6.5,3 T12.5,3 T18.5,3 T23.5,2.4"/></svg>
<span class="t" style="font-size:22.4px;color:#bcbfc5;letter-spacing:0.157px;left:1524.40px;top:1225.34px;">CheckStyle</span>
<svg class="i" style="left:1682px;top:1225px;" width="27" height="23" viewBox="0 0 27 23"><path fill="#e6e6e8" d="M0.5,11.8 L6.8,0.8 L19.6,0.8 L25.9,11.8 L19.6,22.6 L6.8,22.6 Z"/><path fill="#171d26" d="M8.6,6.4 L19,12 L8.6,17.8 Z"/></svg>
<span class="t" style="font-size:22.4px;color:#bcbfc5;letter-spacing:0.130px;left:1716.20px;top:1225.34px;">Services</span>
<svg class="i" style="left:1844px;top:1224px;" width="27" height="27" viewBox="0 0 27 27"><path fill="#d10a0a" d="M13,0 C20.4,0 26.4,5.6 26.4,13 V26 H13 C5.6,26 0,20.4 0,13 C0,5.6 5.6,0 13,0 Z"/></svg>
<span class="t" style="font-size:17.5px;color:#ffffff;letter-spacing:1.748px;font-weight:700;left:1846.60px;top:1228.59px;-webkit-text-stroke:0.5px #fff;">9+</span>
<span class="t" style="font-size:22.4px;color:#bcbfc5;letter-spacing:-0.072px;left:1878.40px;top:1225.34px;">Event Log</span>
<svg class="i" style="left:11px;top:1265px;" width="26" height="26" viewBox="0 0 26 26"><path fill="none" stroke="#e6e6e8" stroke-width="2" d="M6.3,1.9 H24.2 V19.7 H6.3 Z M4.4,5.4 H1.8 V23.5 H20.8 V21.4"/></svg>
<span class="t" style="font-size:22.4px;color:#b9bcc2;letter-spacing:0.255px;left:62.40px;top:1266.94px;">Auto fetch: finished (9 minutes ago)</span>
<svg class="i" style="left:1261.8px;top:1264px;" width="34" height="31" viewBox="0 0 34 31"><g transform="scale(0.985)"><path fill="#bbbbbb" d="M3.3,10.6 C1,12.8 0,15.4 0,18.4 C0,25 7.5,29.1 16.3,29.1 C25.1,29.1 32.6,25 32.6,18.4 C32.6,15.4 31.6,12.8 29.3,10.6 Z"/><rect x="3.3" y="0" width="13" height="13.6" rx="5.6" fill="#bbbbbb"/><rect x="16.3" y="0" width="13" height="13.6" rx="5.6" fill="#bbbbbb"/><path fill="#171d26" d="M9,3.7 H11.6 C13.4,3.7 14.2,4.8 14.2,6.4 V8.4 C14.2,10.6 12.8,11.5 10.6,11.5 H8.8 C7,11.5 6.1,10.6 6.3,8.8 L6.6,6.2 C6.8,4.6 7.6,3.7 9,3.7 Z"/><path fill="#171d26" d="M23.6,3.7 H21 C19.2,3.7 18.4,4.8 18.4,6.4 V8.4 C18.4,10.6 19.8,11.5 22,11.5 H23.8 C25.6,11.5 26.5,10.6 26.3,8.8 L26,6.2 C25.8,4.6 25,3.7 23.6,3.7 Z"/><path fill="#171d26" d="M6.2,14.2 H12.6 C14.4,13.8 15.6,12.6 16.3,10.8 C17,12.6 18.2,13.8 20,14.2 H26.4 V22.4 C22,25.6 10.6,25.6 6.2,22.4 Z"/><rect x="11.2" y="16.9" width="2.9" height="5.9" rx="1.45" fill="#bbbbbb"/><rect x="18.5" y="16.9" width="2.9" height="5.9" rx="1.45" fill="#bbbbbb"/></g></svg>
<span class="t" style="font-size:22.4px;color:#b9bcc2;letter-spacing:0.161px;left:1320.20px;top:1266.94px;">85:19</span>
<span class="t" style="font-size:20.6px;color:#56616e;letter-spacing:-0.740px;left:1403.20px;top:1268.46px;">LF</span>
<span class="t" style="font-size:22.4px;color:#b9bcc2;letter-spacing:0.235px;left:1450.80px;top:1266.94px;">UTF-8</span>
<span class="t" style="font-size:22.4px;color:#b9bcc2;letter-spacing:0.264px;left:1540.60px;top:1266.94px;">4 spaces</span>
<svg class="i" style="left:1659.8px;top:1263.4px;" width="22" height="32" viewBox="0 0 22 32"><path fill="none" stroke="#e6e6e8" stroke-width="2.8" d="M4.2,3.6 V25.8 M16,6.3 C16,14.95 10,16.45 4.6,20.6"/><circle cx="4.2" cy="3.6" r="3.2" fill="#e6e6e8"/><circle cx="4.2" cy="25.8" r="3.2" fill="#e6e6e8"/><circle cx="16" cy="5.9" r="3.2" fill="#e6e6e8"/></svg>
<div class="r" style="left:1672px;top:1280px;width:14px;height:14px;background:#0b5be0;border-radius:50%;"></div>
<span class="t" style="font-size:22.4px;color:#b9bcc2;letter-spacing:-0.017px;left:1690.20px;top:1266.94px;">main</span>
<svg class="i" style="left:1755px;top:1263px;" width="36" height="32" viewBox="0 0 36 32"><path fill="#d30404" d="M8,21 C3.6,21 1,18.2 1,14.6 C1,11 3.8,8.6 7,8.6 C8,4 11.8,1 16.6,1 C21.4,1 25,3.8 26,8 C30,8.4 32.6,11 33,14.6 C30,12.8 26,13.4 24,16 C22.6,17.6 22,19.4 22.4,21 Z"/><rect x="13" y="3" width="4" height="8.4" fill="#23141a"/><rect x="13" y="13.2" width="4" height="3.4" fill="#23141a"/><g transform="translate(26,24)"><circle r="4.4" fill="none" stroke="#ececee" stroke-width="2.6"/><path stroke="#ececee" stroke-width="2.6" d="M0,-7 V-4 M0,7 V4 M-7,0 H-4 M7,0 H4 M-5,-5 L-3,-3 M5,5 L3,3 M-5,5 L-3,3 M5,-5 L3,-3"/></g></svg>
<div class="r" style="left:1808px;top:1264px;width:28px;height:28px;background:#0a3fa6;border-radius:50%;"></div>
<svg class="i" style="left:1808px;top:1264px;" width="28" height="28" viewBox="0 0 28 28"><path fill="none" stroke="#76cdfb" stroke-width="2" stroke-linejoin="miter" d="M14,7.4 L21.2,19.6 H6.8 Z"/></svg>
<span class="t" style="font-size:22.4px;color:#b9bcc2;letter-spacing:0.491px;left:1842.60px;top:1266.94px;">22 Δ/0</span>
<span class="t" style="font-size:22.5px;color:#b9bcc2;letter-spacing:0.000px;left:1905.40px;top:1267.25px;font-family:'DejaVu Sans',sans-serif;-webkit-text-stroke:0.1px currentColor;transform:scaleX(1.34);">↑</span>
<span class="t" style="font-size:22.4px;color:#b9bcc2;letter-spacing:0.000px;left:1930.80px;top:1266.94px;">1</span>
<span class="t" style="font-size:22.5px;color:#b9bcc2;letter-spacing:0.000px;left:1937.40px;top:1267.25px;font-family:'DejaVu Sans',sans-serif;-webkit-text-stroke:0.1px currentColor;transform:scaleX(1.34);">↓</span>
<div class="r" style="left:1978px;top:1264px;width:13px;height:13px;background:#fb3305;"></div>
<div class="r" style="left:1993px;top:1264px;width:13px;height:13px;background:#62bb06;"></div>
<div class="r" style="left:1978px;top:1279px;width:13px;height:13px;background:#08a0f5;"></div>
<div class="r" style="left:1993px;top:1279px;width:13px;height:13px;background:#ffb003;"></div>
</div>
</body></html>
